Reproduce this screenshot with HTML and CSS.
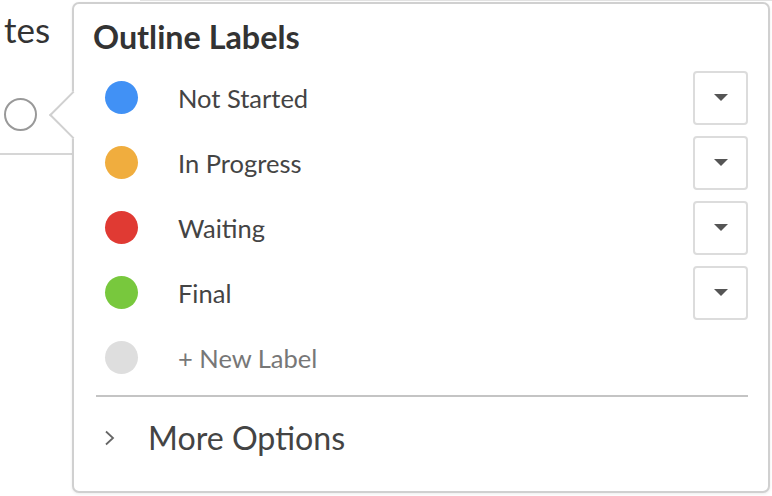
FILE: index.html
```html
<!DOCTYPE html>
<html lang="en">
<head>
  <meta charset="UTF-8">
  <meta name="viewport" content="width=device-width, initial-scale=1.0">
  <title>Outline Labels</title>
  <link rel="stylesheet" href="styles.css">
</head>
<body>
  <div class="sheet">
    <div class="sheet-top"></div>
    <div class="cell-title">tes</div>
    <div class="cell-status"><span class="status-ring"></span></div>
    <div class="cell-line"></div>
  </div>

  <div class="popup">
    <h2 class="popup-title">Outline Labels</h2>

    <div class="labels">
      <div class="label-row">
        <span class="dot" style="background-color: #4191f5;"></span>
        <span class="label-name">Not Started</span>
        <button class="label-menu"><span class="caret"></span></button>
      </div>
      <div class="label-row">
        <span class="dot" style="background-color: #f0ad3e;"></span>
        <span class="label-name">In Progress</span>
        <button class="label-menu"><span class="caret"></span></button>
      </div>
      <div class="label-row">
        <span class="dot" style="background-color: #e03a33;"></span>
        <span class="label-name">Waiting</span>
        <button class="label-menu"><span class="caret"></span></button>
      </div>
      <div class="label-row">
        <span class="dot" style="background-color: #78c83d;"></span>
        <span class="label-name">Final</span>
        <button class="label-menu"><span class="caret"></span></button>
      </div>
      <div class="label-row new">
        <span class="dot" style="background-color: #dedede;"></span>
        <span class="label-name">+ New Label</span>
      </div>
    </div>

    <div class="more">
      <svg class="chevron" width="14" height="20" viewBox="0 0 14 20">
        <path d="M3 3.5 L10 10 L3 16.5" fill="none" stroke="#666" stroke-width="1.8"/>
      </svg>
      <span>More Options</span>
    </div>
  </div>
</body>
</html>
```

FILE: styles.css
```css
body {
  margin: 0;
  font-family: Lato, "Open Sans", sans-serif;
  background-color: #fff;
  color: #333;
}
.sheet {
  position: relative;
  width: 772px;
  height: 496px;
  overflow: hidden;
}
.sheet-top {
  height: 1px;
  margin-left: 140px;
  background-color: #e2e2e2;
}
.cell-title {
  padding: 8px 0 0 4px;
  font-size: 35px;
  line-height: 40px;
  color: #333;
}
.cell-status {
  padding: 49px 0 0 4px;
}
.status-ring {
  display: block;
  width: 29px;
  height: 29px;
  border: 2px solid #999;
  border-radius: 50%;
}
.cell-line {
  width: 72px;
  height: 2px;
  margin-top: 22px;
  background-color: #d6d6d6;
}
.popup {
  position: absolute;
  left: 72px;
  top: 2px;
  width: 698px;
  height: 491px;
  box-sizing: border-box;
  border: 2px solid #d0d0d0;
  border-radius: 7px;
  background-color: #fff;
  padding: 16px 20px 0 19px;
  box-shadow: 0 1px 3px rgba(0,0,0,0.08);
}
.popup::before {
  content: "";
  position: absolute;
  left: -18px;
  top: 94px;
  width: 32px;
  height: 32px;
  background-color: #fff;
  border-left: 2px solid #d0d0d0;
  border-bottom: 2px solid #d0d0d0;
  transform: rotate(45deg);
}
.popup-title {
  position: relative;
  margin: 0 0 11px 0;
  font-size: 32.3px;
  font-weight: bold;
  line-height: 34px;
  color: #333;
}
.labels {
  position: relative;
}
.label-row {
  display: flex;
  align-items: center;
  height: 65px;
}
.dot {
  width: 33px;
  height: 33px;
  margin-left: 12px;
  border-radius: 50%;
  flex-shrink: 0;
}
.label-name {
  margin-left: 40px;
  font-size: 25.5px;
  color: #444;
}
.label-row.new .label-name {
  color: #777;
}
.label-menu {
  margin-left: auto;
  width: 55px;
  height: 54px;
  border: 2px solid #dcdcdc;
  border-radius: 4px;
  background-color: #fff;
  display: flex;
  align-items: center;
  justify-content: center;
  padding: 0;
}
.caret {
  width: 0;
  height: 0;
  border-left: 7px solid transparent;
  border-right: 7px solid transparent;
  border-top: 7px solid #555;
}
.more {
  display: flex;
  align-items: center;
  margin: 5px 0 0 3px;
  padding-top: 21px;
  border-top: 2px solid #c4c4c4;
}
.chevron {
  margin-left: 7px;
}
.more span {
  margin-left: 31px;
  font-size: 32.2px;
  color: #444;
}
```
